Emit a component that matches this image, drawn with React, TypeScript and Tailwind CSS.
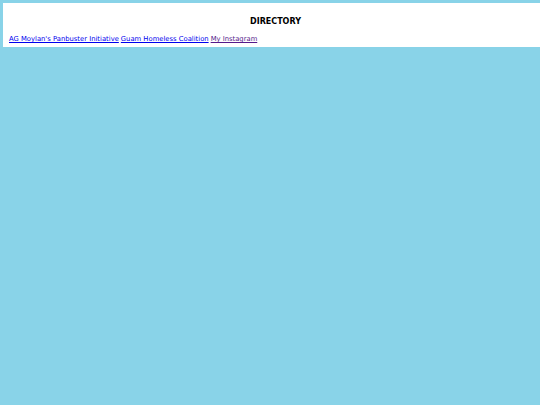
import React from 'react';

export default function App() {
  return (
    <div className="min-h-screen bg-[#89d3e8] pt-[3px] pl-[3px] font-['DejaVu_Sans',sans-serif]">
      {/* Directory card */}
      <div className="bg-white h-[44px] w-full pt-[14px] pl-[6px]">
        <h1 className="text-center text-[8px] font-bold text-black leading-[10px] pl-[2px]">DIRECTORY</h1>
        <div className="mt-[7px] text-[6.8px] leading-[10px] space-x-[2px]">
          <a href="#" className="text-[#0000ee] underline">AG Moylan's Panbuster Initiative</a>
          <a href="#" className="text-[#0000ee] underline">Guam Homeless Coalition</a>
          <a href="#" className="text-[#551a8b] underline">My Instagram</a>
        </div>
      </div>
    </div>
  );
}
